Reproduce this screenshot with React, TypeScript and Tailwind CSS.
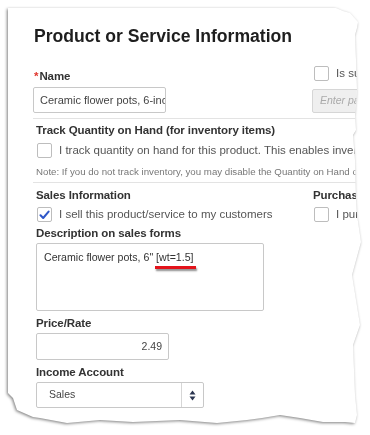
import React from "react";

function Box({ checked = false }: { checked?: boolean }) {
  return (
    <span className="flex h-[15px] w-[15px] shrink-0 items-center justify-center rounded-[2px] border border-[#bdbdbd] bg-white">
      {checked && (
        <svg width="11" height="10" viewBox="0 0 11 10">
          <path d="M1.5 5.2 L4.2 8 L9.6 1.6" fill="none" stroke="#2f57c8" strokeWidth="2" strokeLinecap="round" strokeLinejoin="round" />
        </svg>
      )}
    </span>
  );
}

const clip =
  "[clip-path:polygon(0px_0px,328px_0px,335px_3px,342px_5px,350px_14px,349px_20px,347px_27px,348px_52px,349px_82px,347px_107px,348px_122px,345px_127px,347px_152px,348px_192px,349px_207px,353px_234px,344px_267px,352px_317px,345px_337px,347px_387px,349px_407px,347px_415px,337px_414px,315px_414px,292px_410px,272px_407px,254px_410px,239px_412px,209px_415px,172px_412px,125px_414px,92px_412px,59px_415px,32px_410px,25px_409px,9px_402px,5px_390px,0px_385px)]";

const label = "h-[14px] whitespace-nowrap text-[11.5px] font-bold leading-[14px] tracking-[-0.1px] text-[#333]";
const body = "flex h-[15px] items-center gap-[7px] whitespace-nowrap text-[11.5px] text-[#555]";

export default function App() {
  return (
    <div className="h-[435px] w-[370px] overflow-hidden bg-white pl-2 pt-2 font-['Liberation_Sans',Arial,sans-serif]">
      <div className="h-[418px] w-[354px] drop-shadow-[-1px_1px_1.5px_rgba(0,0,0,0.5)]">
        <div className={`h-[418px] w-[354px] overflow-hidden bg-white pl-[25px] pt-[17px] ${clip}`}>
          <h1 className="ml-[1px] whitespace-nowrap text-[17.6px] font-bold leading-[22px] text-[#1e1e1e]">
            Product or Service Information
          </h1>

          {/* Name row */}
          <div className="flex items-start">
            <div className="w-[279px] shrink-0">
              <div className={`mt-[22px] flex items-center pl-[1px] ${label}`}>
                <span className="mr-[1px] text-[#e0342c]">*</span>Name
              </div>
              <div className="mt-[4px] flex h-[26px] w-[133px] items-center overflow-hidden whitespace-nowrap rounded-[2px] border border-[#c8c8c8] pl-[6px] text-[11px] text-[#444]">
                Ceramic flower pots, 6-inch
              </div>
            </div>
            <div className="shrink-0">
              <div className={`mt-[19px] pl-[2px] ${body}`}>
                <Box />
                Is sub-product
              </div>
              <div className="mt-[8px] flex h-[24px] w-[120px] items-center rounded-[2px] border border-[#d6d6d6] bg-[#efefef] pl-[7px] text-[10.5px] italic text-[#aaa]">
                Enter parent
              </div>
            </div>
          </div>

          <div className="mt-[5px] border-t border-[#e3e3e3]" />

          {/* Track quantity */}
          <div className="pl-[3px]">
            <div className={`mt-[4px] ${label}`}>Track Quantity on Hand (for inventory items)</div>
            <div className={`mt-[6px] pl-[1px] ${body}`}>
              <Box />
              I track quantity on hand for this product. This enables inventory tracking
            </div>
            <div className="mt-[8px] h-[12px] whitespace-nowrap text-[9.7px] leading-[12px] text-[#777]">
              Note: If you do not track inventory, you may disable the Quantity on Hand option
            </div>
          </div>

          <div className="mt-[4px] border-t border-[#e3e3e3]" />

          {/* Sales / Purchasing */}
          <div className="flex items-start">
            <div className="w-[279px] shrink-0 pl-[3px]">
              <div className={`mt-[5px] ${label}`}>Sales Information</div>
              <div className={`mt-[5px] pl-[1px] ${body}`}>
                <Box checked />
                I sell this product/service to my customers
              </div>
              <div className={`mt-[4px] ${label}`}>Description on sales forms</div>
              <div className="mt-[3px] h-[68px] w-[228px] rounded-[2px] border border-[#c8c8c8] pl-[7px] pt-[7px] text-[10.6px] leading-[13px] text-[#333]">
                Ceramic flower pots, 6" <span className="relative">
                  [wt=1.5]
                  <span className="absolute left-[-1px] right-[-2px] top-[15px] h-[3px] bg-[#e3131b] shadow-[1px_2px_2px_rgba(0,0,0,0.45)]" />
                </span>
              </div>
              <div className={`mt-[5px] ${label}`}>Price/Rate</div>
              <div className="mt-[3px] flex h-[27px] w-[133px] items-center justify-end rounded-[2px] border border-[#c8c8c8] pr-[6px] text-[10.5px] text-[#444]">
                2.49
              </div>
              <div className={`mt-[5px] ${label}`}>Income Account</div>
              <div className="mt-[3px] flex h-[26px] w-[168px] items-center rounded-[2px] border border-[#c8c8c8] text-[10.5px] text-[#444]">
                <span className="flex-1 pl-[12px]">Sales</span>
                <span className="flex h-full w-[22px] items-center justify-center border-l border-[#d6d6d6]">
                  <svg width="7" height="11" viewBox="0 0 7 11">
                    <path d="M3.5 0.5 L6.5 4.5 L0.5 4.5 Z M3.5 10.5 L6.5 6.5 L0.5 6.5 Z" fill="#2b3550" />
                  </svg>
                </span>
              </div>
            </div>
            <div className="shrink-0">
              <div className={`mt-[5px] pl-[1px] ${label}`}>Purchasing information</div>
              <div className={`mt-[5px] pl-[2px] ${body}`}>
                <Box />
                I purchase this product/service
              </div>
            </div>
          </div>
        </div>
      </div>
    </div>
  );
}
